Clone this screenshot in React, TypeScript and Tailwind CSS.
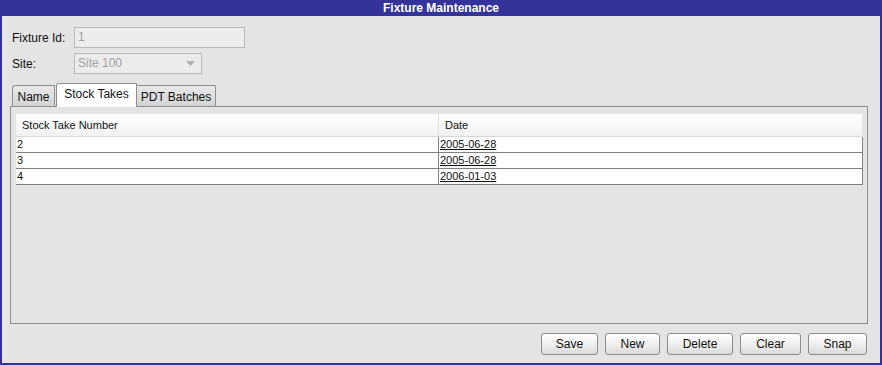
import React from "react";

const font = { fontFamily: '"Liberation Sans", Arial, sans-serif' };

function Btn({ label, w }: { label: string; w: string }) {
  return (
    <button
      className={`${w} h-[22px] border border-[#8d8d8d] rounded-[3px] bg-gradient-to-b from-[#ffffff] via-[#f0f0f0] to-[#d9d9d9] text-[12px] text-[#111] leading-none`}
    >
      {label}
    </button>
  );
}

const rows = [
  { n: "2", d: "2005-06-28" },
  { n: "3", d: "2005-06-28" },
  { n: "4", d: "2006-01-03" },
];

export default function App() {
  return (
    <div
      style={font}
      className="w-[882px] h-[365px] bg-[#e4e4e4] flex flex-col border-x-2 border-b-2 border-[#333399] text-[#111]"
    >
      <div className="h-[16px] -mx-[2px] bg-[#333399] text-white font-bold text-[12px] leading-[16px] text-center">
        Fixture Maintenance
      </div>

      <div className="pl-[10px] pt-[11px] flex flex-col gap-[5px]">
        <div className="flex items-center h-[21px]">
          <div className="w-[62px] text-[12px]">Fixture Id:</div>
          <div className="w-[171px] h-[21px] border border-[#b9b9b9] bg-[#ececec] text-[#a0a0a0] text-[12px] leading-[19px] px-[3px]">
            1
          </div>
        </div>
        <div className="flex items-center h-[21px]">
          <div className="w-[62px] text-[12px]">Site:</div>
          <div className="w-[128px] h-[21px] border border-[#b9b9b9] bg-[#ececec] text-[#a0a0a0] text-[12px] leading-[19px] px-[3px] flex items-center justify-between">
            <span>Site 100</span>
            <svg width="9" height="5" viewBox="0 0 9 5" className="mr-[3px]">
              <path d="M0 0 L9 0 L4.5 5 Z" fill="#b0b0b0" />
            </svg>
          </div>
        </div>
      </div>

      <div className="pl-[8px] pr-[12px] mt-[8px] flex flex-col">
        <div className="flex items-end h-[24px] pl-[2px] relative z-10">
          <div className="w-[43px] h-[21px] border border-b-0 border-[#8e8e8e] rounded-tl-[3px] bg-gradient-to-b from-[#e8e8e8] to-[#d4d4d4] text-[12px] leading-[20px] text-center pt-[1px]">
            Name
          </div>
          <div className="w-[81px] h-[24px] -mb-[1px] ml-[1px] border border-b-0 border-[#8e8e8e] rounded-tl-[3px] bg-white text-[12px] leading-[20px] text-center">
            Stock Takes
          </div>
          <div className="w-[79px] h-[21px] border border-b-0 border-l-0 border-[#8e8e8e] rounded-tr-[2px] bg-gradient-to-b from-[#e8e8e8] to-[#d4d4d4] text-[12px] leading-[20px] text-center pt-[1px]">
            PDT Batches
          </div>
        </div>
        <div className="h-[218px] border border-[#8e8e8e] bg-[#e4e4e4] pl-[5px] pt-[7px]">
          <div className="w-[847px] flex flex-col text-[11px]">
            <div className="flex h-[23px] bg-gradient-to-b from-[#ffffff] to-[#f1f1f1] border-b border-[#d8d8d8] mr-[1px]">
              <div className="w-[423px] pl-[6px] leading-[22px] border-r border-[#e0e0e0]">
                Stock Take Number
              </div>
              <div className="flex-1 pl-[6px] leading-[22px]">Date</div>
            </div>
            {rows.map((r, i) => (
              <div
                key={i}
                className="flex h-[16px] bg-white border-b border-r border-[#808080]"
              >
                <div className="w-[423px] pl-[1px] leading-[15px] border-r border-[#808080]">
                  {r.n}
                </div>
                <div className="flex-1 pl-[1px] leading-[15px] underline">
                  {r.d}
                </div>
              </div>
            ))}
          </div>
        </div>
      </div>

      <div className="flex justify-end gap-[7px] pr-[13px] mt-[9px]">
        <Btn label="Save" w="w-[57px]" />
        <Btn label="New" w="w-[55px]" />
        <Btn label="Delete" w="w-[66px]" />
        <Btn label="Clear" w="w-[61px]" />
        <Btn label="Snap" w="w-[59px]" />
      </div>
    </div>
  );
}
